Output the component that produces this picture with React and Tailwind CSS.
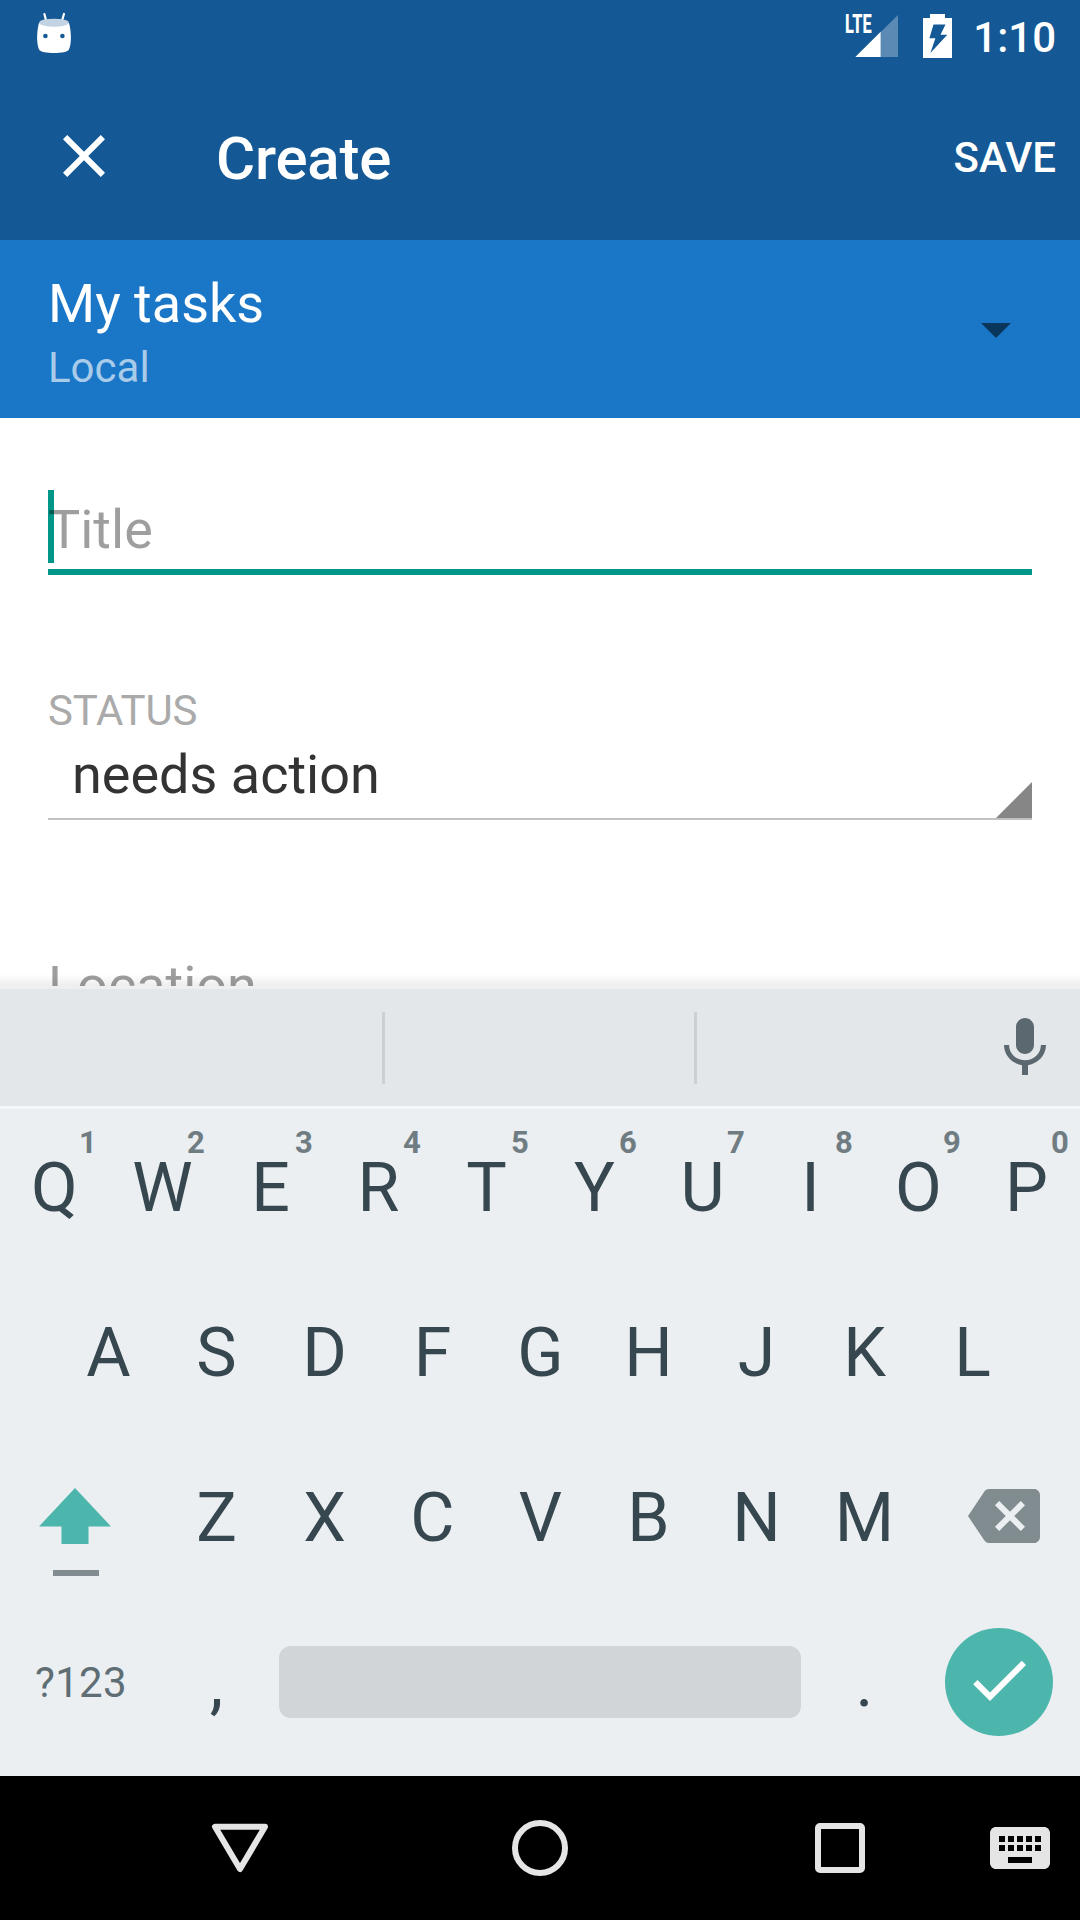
const TOP_ROW = [
  ['Q', '1'], ['W', '2'], ['E', '3'], ['R', '4'], ['T', '5'],
  ['Y', '6'], ['U', '7'], ['I', '8'], ['O', '9'], ['P', '0'],
];
const HOME_ROW = ['A', 'S', 'D', 'F', 'G', 'H', 'J', 'K', 'L'];
const BOTTOM_ROW = ['Z', 'X', 'C', 'V', 'B', 'N', 'M'];

function Icon({ d, className }) {
  return (
    <svg viewBox="0 0 24 24" className={`size-[72px] shrink-0 fill-current ${className || ''}`}>
      <path d={d} />
    </svg>
  );
}

function StatusBar() {
  return (
    <div className="flex h-[72px] items-start justify-between pl-9 pr-6 text-white">
      <svg viewBox="36 12 36 42" className="mt-3 h-[42px] w-9">
        <g stroke="#fff" strokeWidth="2.2" strokeLinecap="round">
          <path d="M44.4 14l2 8M64 14l-2.4 8" />
        </g>
        <path
          d="M39 23C37 30 36 42 39 49.500c1 2.500 8 3.500 15 3.500s14-1 15-3.500c3-7.500 2-19.500 0-26.500z"
          fill="#fff"
        />
        <ellipse cx="54" cy="22.700" rx="14.800" ry="4" fill="#c2d3e3" />
        <circle cx="45.400" cy="36" r="2.300" fill="#145995" />
        <circle cx="62.400" cy="36" r="2.300" fill="#145995" />
      </svg>
      <div className="flex items-start">
        <div className="relative h-[58px] w-[53px]">
          <span className="absolute left-0 top-[11px] origin-left scale-x-[0.63] text-[26px] font-extrabold leading-[27px]">
            LTE
          </span>
          <svg viewBox="845 0 53 58" className="absolute inset-0 h-[58px] w-[53px]">
            <path d="M880.700 32L898 15v42h-17.300z" fill="#5b8bb5" />
            <path d="M855.300 57l25.400-25.200V57z" fill="#fff" />
          </svg>
        </div>
        <svg viewBox="923 14 29 44" className="ml-[25px] mt-[14px] h-11 w-[29px]">
          <path
            fillRule="evenodd"
            fill="#fff"
            d="M930 14h15v4h7v40h-29V18h7zM933.500 24.500h12l-5 10.300h6.800L930.400 53l5-14.700h-6z"
          />
        </svg>
        <span className="ml-[21px] mt-[13px] text-[42px] font-medium leading-[50px]">1:10</span>
      </div>
    </div>
  );
}

function AppBar() {
  return (
    <div className="flex h-[168px] items-center pl-12 pr-6 text-white">
      <Icon d="M19 6.41L17.59 5 12 10.59 6.41 5 5 6.41 10.59 12 5 17.59 6.41 19 12 13.41 17.59 19 19 17.59 13.41 12z" />
      <h1 className="ml-24 flex-1 pt-[5px] text-[60px] font-medium leading-[70px] tracking-[-0.2px]">Create</h1>
      <button className="pt-[3px] text-[42px] font-medium leading-[50px]">SAVE</button>
    </div>
  );
}

function ListPicker() {
  return (
    <div className="flex h-[178px] items-start justify-between bg-[#1a76c7] px-12">
      <div className="pt-8">
        <div className="text-[54px] leading-[64px] text-white">My tasks</div>
        <div className="mt-[7px] text-[42px] leading-[50px] text-[#a8cbe9]">Local</div>
      </div>
      <svg viewBox="0 0 30 15" className="mr-[21px] mt-[83px] h-[15px] w-[30px]">
        <path d="M0 0h30L15 15z" fill="#0a365c" />
      </svg>
    </div>
  );
}

function Form() {
  return (
    <div className="relative h-[568px] overflow-hidden bg-white px-12 pt-[72px]">
      <div className="relative h-[85px] border-b-[6px] border-[#009688]">
        <div className="absolute left-0 top-0 h-[73px] w-1.5 bg-[#009688]" />
        <div className="relative pt-2 text-[54px] leading-[64px] text-black/38">Title</div>
      </div>
      <div className="mt-[111px] text-[42px] leading-[50px] tracking-[-0.2px] text-[#aaaaaa]">STATUS</div>
      <div className="mt-[7px] flex h-[77px] items-start justify-between border-b-2 border-[#c1c1c1] pl-6">
        <span className="text-[54px] leading-[64px] text-[#333333]">needs action</span>
        <svg viewBox="0 0 36 36" className="mt-[39px] size-9">
          <path d="M36 0v36H0z" fill="#868686" />
        </svg>
      </div>
      <div className="mt-[134px] text-[54px] leading-[64px] text-[#9e9e9e]">Location</div>
      <div className="absolute inset-x-0 bottom-0 h-3 bg-linear-to-t from-black/7 to-transparent" />
    </div>
  );
}

function SuggestionStrip() {
  return (
    <div className="flex h-[123px] items-center border-y-[3px] border-b-[#f5f8fa] border-t-[#edeff1] bg-[#e3e7ea]">
      <div className="h-[72px] w-[385px] border-r-[3px] border-[#cbd0d3]" />
      <div className="h-[72px] w-[312px] border-r-[3px] border-[#cbd0d3]" />
      <Icon
        className="ml-auto mr-[19px] mt-px text-[#5b686f]"
        d="M12 14c1.66 0 2.99-1.34 2.99-3L15 5c0-1.66-1.34-3-3-3S9 3.34 9 5v6c0 1.66 1.34 3 3 3zm5.3-3c0 3-2.54 5.1-5.3 5.1S6.7 14 6.7 11H5c0 3.41 2.72 6.23 6 6.72V21h2v-3.28c3.28-.48 6-3.3 6-6.72h-1.7z"
      />
    </div>
  );
}

function Key({ label, hint }) {
  return (
    <div className="relative flex h-[150px] w-[108px] shrink-0 items-center justify-center pl-px text-[68px] leading-[80px] text-[#37474f]">
      {label}
      {hint && (
        <span className="absolute right-0 top-3 w-10 text-center text-[31px] font-bold leading-9 text-[#6f7c82]">
          {hint}
        </span>
      )}
    </div>
  );
}

function Keyboard() {
  return (
    <div className="flex h-[667px] flex-col gap-[15px] bg-[#ebeff2] pt-1">
      <div className="flex">
        {TOP_ROW.map(([label, hint]) => (
          <Key key={label} label={label} hint={hint} />
        ))}
      </div>
      <div className="flex justify-center">
        {HOME_ROW.map((label) => (
          <Key key={label} label={label} />
        ))}
      </div>
      <div className="flex">
        <div className="flex w-[162px] flex-col items-start pl-[39px] pt-[45px]">
          <svg viewBox="0 0 72 56" className="h-14 w-[72px]">
            <path d="M36 0l36 38.5H49.5V56h-27V38.500H0z" fill="#4db6ac" />
          </svg>
          <div className="ml-[14px] mt-[26px] h-1.5 w-[46px] bg-[#818c91]" />
        </div>
        {BOTTOM_ROW.map((label) => (
          <Key key={label} label={label} />
        ))}
        <Icon
          className="ml-[50px] mt-[37px] text-[#818c91]"
          d="M22 3H7c-.69 0-1.23.35-1.59.88L0 12l5.41 8.11c.36.53.9.89 1.59.89h15c1.1 0 2-.9 2-2V5c0-1.1-.9-2-2-2zm-3 12.59L17.59 17 14 13.41 10.41 17 9 15.59 12.59 12 9 8.41 10.41 7 14 10.59 17.59 7 19 8.41 15.41 12 19 15.59z"
        />
      </div>
      <div className="flex items-center">
        <div className="w-[162px] pl-[35px] text-[42px] leading-[50px] tracking-[0.3px] text-[#5f6d74]">?123</div>
        <Key label="," />
        <div className="mx-[9px] mb-0.5 h-[72px] w-[522px] rounded-xl bg-[#d1d5d8]" />
        <Key label="." />
        <div className="mb-0.5 ml-[27px] flex size-[108px] items-center justify-center rounded-full bg-[#4db6ac] pb-1 text-white">
          <Icon d="M9 16.17L4.83 12l-1.42 1.41L9 19 21 7l-1.41-1.41z" />
        </div>
      </div>
    </div>
  );
}

function NavBar() {
  return (
    <div className="flex h-36 items-center bg-black text-[#e5e5e5]">
      <svg viewBox="0 0 60 60" className="ml-[210px] size-[60px]" fill="none" stroke="currentColor" strokeWidth="6" strokeLinejoin="round">
        <path d="M5 8.800h50L30 51z" />
      </svg>
      <svg viewBox="0 0 60 60" className="ml-[240px] size-[60px]" fill="none" stroke="currentColor" strokeWidth="6">
        <circle cx="30" cy="30" r="25" />
      </svg>
      <svg viewBox="0 0 60 60" className="ml-[240px] size-[60px]" fill="none" stroke="currentColor" strokeWidth="6">
        <rect x="8" y="8" width="44" height="44" rx="2" />
      </svg>
      <Icon
        className="ml-[114px]"
        d="M20 5H4c-1.1 0-1.99.9-1.99 2L2 17c0 1.1.9 2 2 2h16c1.1 0 2-.9 2-2V7c0-1.1-.9-2-2-2zm-9 3h2v2h-2V8zm0 3h2v2h-2v-2zM8 8h2v2H8V8zm0 3h2v2H8v-2zm-1 2H5v-2h2v2zm0-3H5V8h2v2zm9 7H8v-2h8v2zm0-4h-2v-2h2v2zm0-3h-2V8h2v2zm3 3h-2v-2h2v2zm0-3h-2V8h2v2z"
      />
    </div>
  );
}

export default function App() {
  return (
    <div className="flex h-[1920px] w-[1080px] flex-col overflow-hidden font-['Roboto',sans-serif]">
      <div className="bg-[#145995]">
        <StatusBar />
        <AppBar />
      </div>
      <ListPicker />
      <Form />
      <SuggestionStrip />
      <Keyboard />
      <NavBar />
    </div>
  );
}
